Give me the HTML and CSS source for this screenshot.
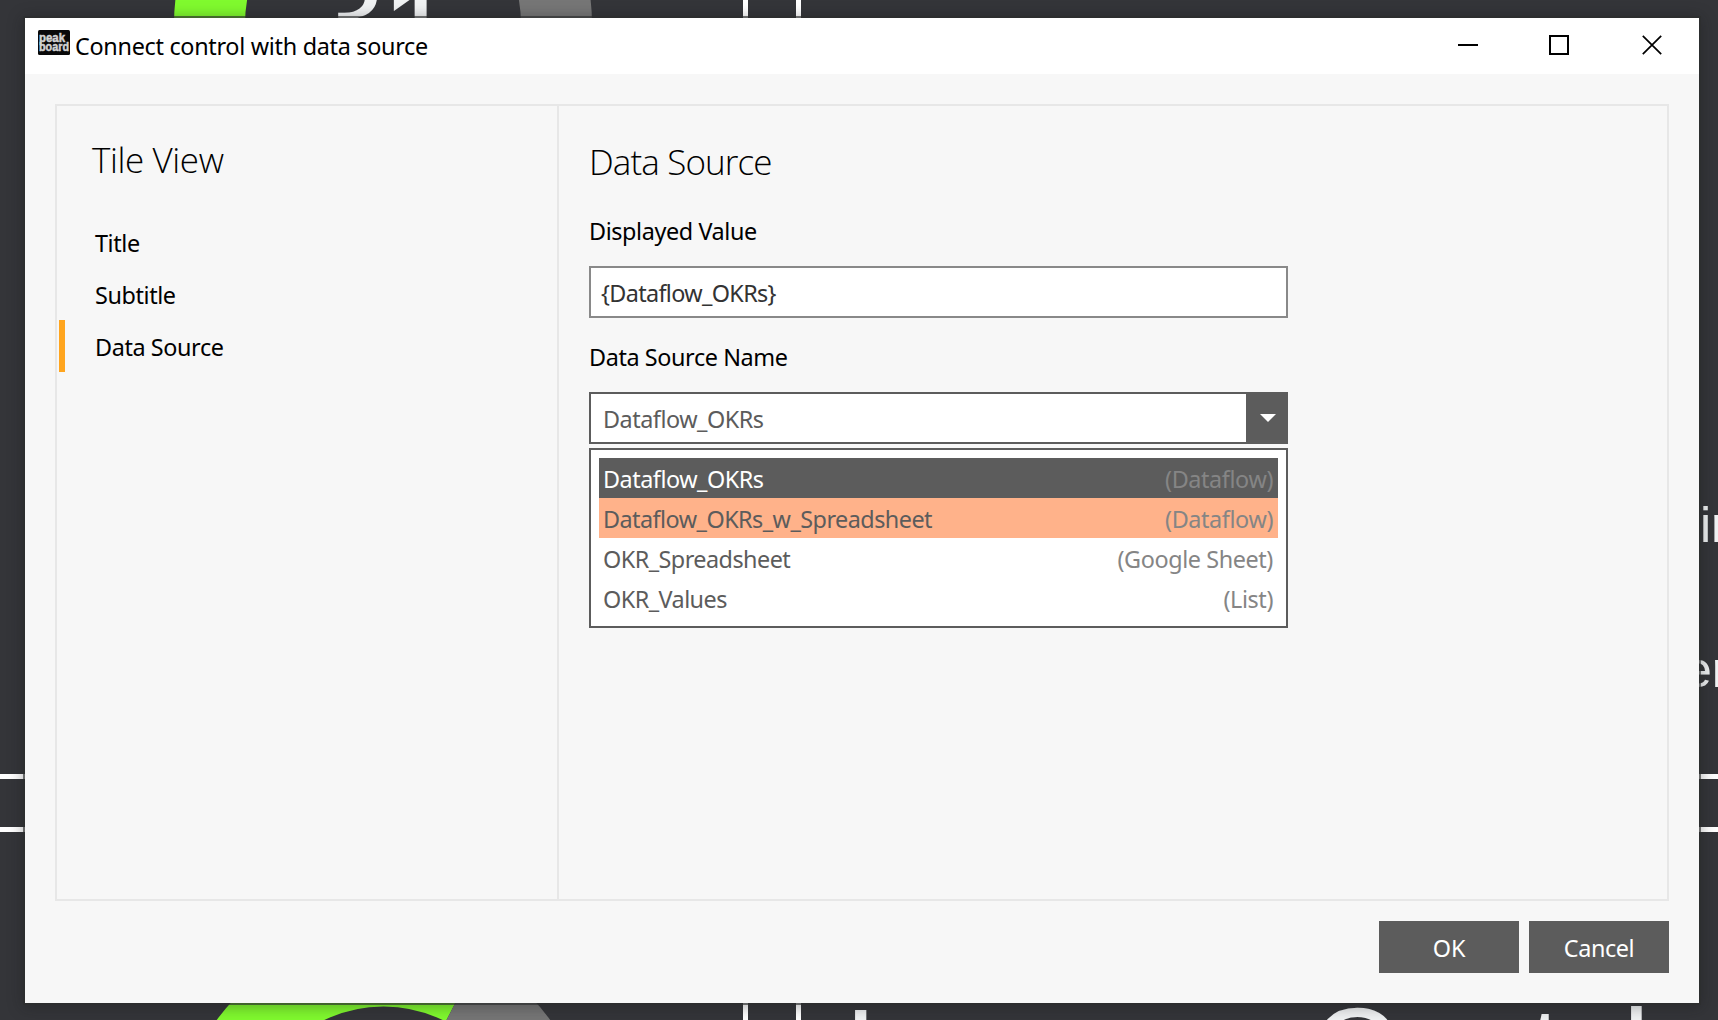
FILE: index.html
```html
<!DOCTYPE html>
<html lang="en">
<head>
<meta charset="utf-8">
<title>Connect control with data source</title>
<link rel="stylesheet" href="styles.css">
</head>
<body>
<svg class="canvas" width="1718" height="1020" viewBox="0 0 1718 1020">
  <g fill="none" stroke-width="71">
    <path stroke="#80fa2e" d="M209.500 24A173.500 173.500 0 0 1 383 -149.500"/>
    <path stroke="#767676" d="M383 -149.500A173.500 173.500 0 0 1 556.500 24"/>
    <path stroke="#80fa2e" d="M212.500 1142A171 171 0 0 1 462 990"/>
    <path stroke="#767676" d="M462 990A171 171 0 0 1 554.500 1142"/>
  </g>
  <path fill="#fff" d="M743 0h5v1020h-5zM796 0h5v1020h-5zM0 774h1718v5H0zM0 827h1718v5H0z"/>
  <g class="canvas-text">
    <text x="311" y="65" font-size="134">3</text><text x="381" y="77" font-size="134">1</text>
    <text x="1700" y="542" font-size="50">in</text><text x="1684" y="687" font-size="50">er</text>
    <text x="844" y="1093" font-size="120">I</text><text x="1311" y="1092" font-size="120">C</text>
    <text x="1529" y="1092" font-size="120">t</text><text x="1623" y="1093" font-size="120">l</text>
  </g>
</svg>
<main class="dialog">
  <header class="titlebar">
    <svg class="logo" width="32" height="25" viewBox="0 0 32 25">
      <rect width="32" height="25" rx="1.500" fill="#090909"/>
      <text x="1" y="11.500" textLength="26" lengthAdjust="spacingAndGlyphs">peak</text>
      <text x="1" y="20.500" textLength="30" lengthAdjust="spacingAndGlyphs">board</text>
    </svg>
    <h1 class="caption">Connect control with data source</h1>
    <div class="window-buttons">
      <svg width="20" height="20" viewBox="0 0 20 20"><path d="M0 10h20" stroke="#000" stroke-width="2"/></svg>
      <svg width="20" height="20" viewBox="0 0 20 20"><path d="M1 1h18v18H1z" fill="none" stroke="#000" stroke-width="2"/></svg>
      <svg class="close" width="20" height="20" viewBox="0 0 20 20"><path d="M.8.8l18.400 18.400M19.200.8L.8 19.200" stroke="#000" stroke-width="1.700"/></svg>
    </div>
  </header>
  <div class="body">
    <div class="panes">
      <nav class="sidebar">
        <h2 class="heading heading-side">Tile View</h2>
        <ul class="tabs">
          <li class="tab">Title</li>
          <li class="tab">Subtitle</li>
          <li class="tab tab-active">Data Source</li>
        </ul>
      </nav>
      <section class="content">
        <h2 class="heading">Data Source</h2>
        <div class="label">Displayed Value</div>
        <div class="field">{Dataflow_OKRs}</div>
        <div class="label">Data Source Name</div>
        <div class="combo">
          <div class="combo-value">Dataflow_OKRs</div>
          <div class="combo-button"><svg width="16" height="8" viewBox="0 0 16 8"><path d="M0 0h16L8 8z" fill="#fff"/></svg></div>
        </div>
        <ul class="options">
          <li class="option option-selected"><span>Dataflow_OKRs</span><span class="kind">(Dataflow)</span></li>
          <li class="option option-hover"><span>Dataflow_OKRs_w_Spreadsheet</span><span class="kind">(Dataflow)</span></li>
          <li class="option"><span>OKR_Spreadsheet</span><span class="kind">(Google Sheet)</span></li>
          <li class="option"><span>OKR_Values</span><span class="kind">(List)</span></li>
        </ul>
      </section>
    </div>
    <footer class="actions">
      <div class="button button-ok">OK</div>
      <div class="button">Cancel</div>
    </footer>
  </div>
</main>
</body>
</html>
```
FILE: styles.css
```css
* { box-sizing: border-box; }
body { margin: 0; width: 1718px; height: 1020px; overflow: hidden; background: #343539; padding: 18px 19px 17px 25px; font: 23.4px/40px "Noto Sans", "Open Sans", sans-serif; letter-spacing: -.4px; color: #000; }
ul { list-style: none; margin: 0; padding: 0; }
svg { display: block; }
.canvas { position: absolute; left: 0; top: 0; letter-spacing: 0; }
.canvas-text { font-family: "Liberation Sans", Arial, sans-serif; fill: #f0f2f3; }
.dialog { position: relative; width: 1674px; height: 985px; display: flex; flex-direction: column; background: #f7f7f7; box-shadow: 0 0 0 2px rgba(44, 46, 46, .65), 0 2px 14px 2px rgba(20, 20, 24, .35); }
.titlebar { height: 56px; background: #fff; display: flex; align-items: flex-start; padding: 12px 37px 0 13px; }
.logo { font: bold 12px "Liberation Sans", Arial, sans-serif; letter-spacing: 0; fill: #d2d2d2; stroke: #d2d2d2; stroke-width: .5px; }
.logo rect { stroke: none; }
.caption { margin: -4px 0 0 5px; font-size: 23.4px; line-height: 40px; font-weight: 400; letter-spacing: -.3px; flex: 1; }
.window-buttons { display: flex; gap: 71px; padding-top: 5px; }
.close { margin-left: 2px; }
.body { flex: 1; display: flex; flex-direction: column; padding: 30px; }
.panes { height: 797px; border: 2px solid #e7e7e7; display: flex; }
.sidebar { width: 502px; border-right: 2px solid #e7e7e7; padding: 33px 0 0 2px; }
.heading { margin: 0; font: 300 35px/42px "Open Sans", "Noto Sans", sans-serif; letter-spacing: -.88px; }
.heading-side { padding-left: 33px; letter-spacing: -.4px; }
.tabs { padding-top: 35px; }
.tab { height: 52px; line-height: 54px; padding-left: 36px; }
.tab-active { border-left: 6px solid #ffa51e; padding-left: 30px; }
.content { width: 729px; padding: 35px 0 0 30px; }
.heading + .label { margin-top: 28px; }
.label { line-height: 40px; margin-top: 19px; }
.field { margin-top: 15px; height: 52px; border: 2px solid #898989; background: #fff; line-height: 50px; padding-left: 10px; color: #333; letter-spacing: -.65px; }
.combo { margin-top: 15px; height: 52px; border: 2px solid #5c5c5c; background: #fff; display: flex; line-height: 50px; color: #5c5c5c; letter-spacing: -.48px; }
.combo-value { flex: 1; padding-left: 12px; }
.combo-button { width: 40px; background: #5c5c5c; padding: 20px 0 0 14px; }
.options { margin-top: 4px; height: 180px; border: 2px solid #5c5c5c; background: #fff; padding: 8px; color: #5c5c5c; letter-spacing: -.54px; }
.option { height: 40px; line-height: 42px; display: flex; justify-content: space-between; padding: 0 5px 0 4px; }
.option-selected { background: #5c5c5c; color: #fff; letter-spacing: -.48px; }
.option-hover { background: #ffb28a; }
.kind { color: #858585; letter-spacing: -.4px; }
.actions { display: flex; justify-content: flex-end; gap: 10px; padding-top: 20px; }
.button { width: 140px; height: 52px; line-height: 54px; background: #5c5c5c; color: #fff; text-align: center; }
.button-ok { letter-spacing: 0; }
```
